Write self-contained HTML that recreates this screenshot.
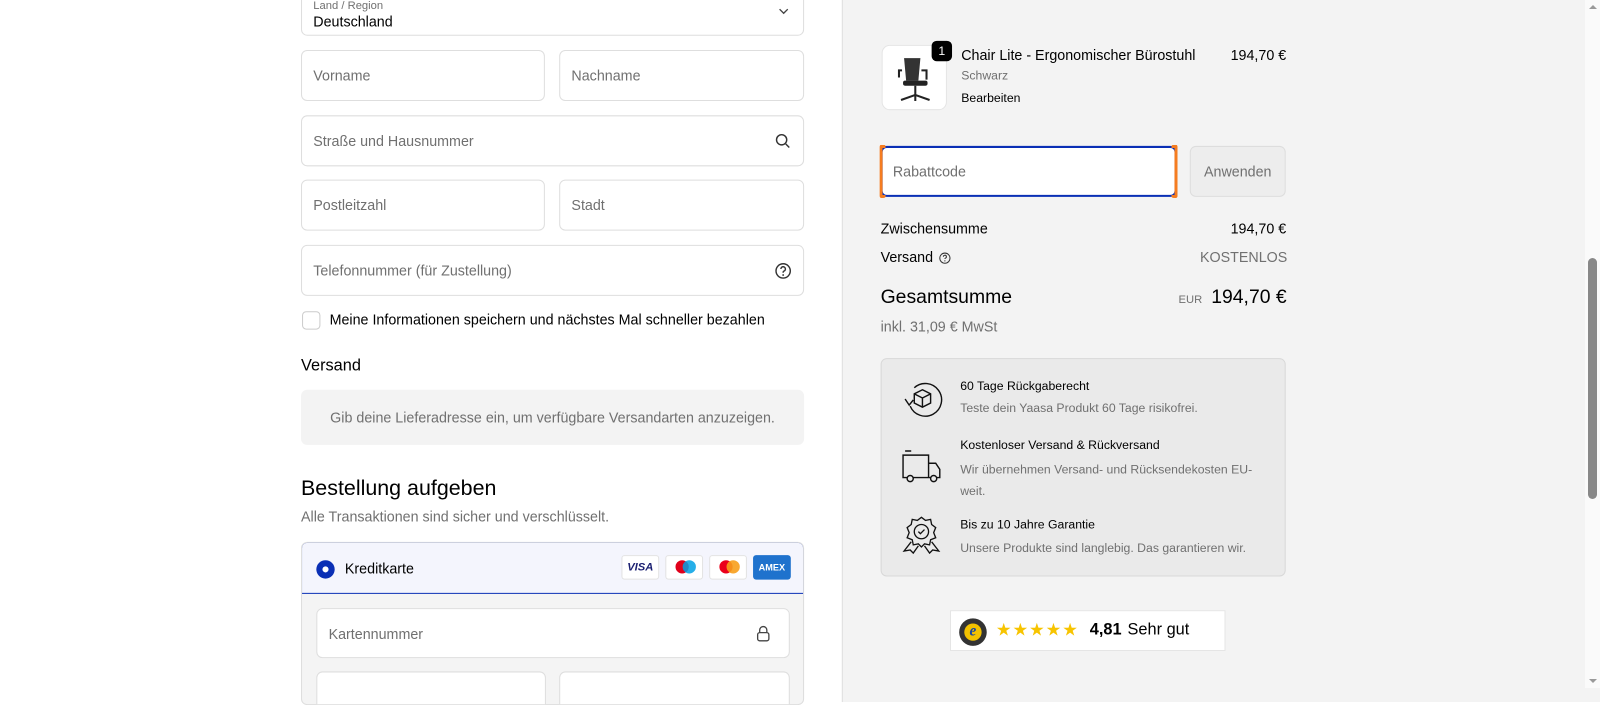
<!DOCTYPE html>
<html><head><meta charset="utf-8"><style>
*{box-sizing:border-box;margin:0;padding:0}
body{width:1600px;height:688px;overflow:hidden;background:#fff;font-family:"Liberation Sans",sans-serif;position:relative;color:#000}
.wrap{position:absolute;left:0;top:0;width:1568px;height:688px;transform:scale(1.0204);transform-origin:0 0}
.a{position:absolute}
.inp{position:absolute;border:1px solid #dedede;border-radius:6px;background:#fff;font-size:14px;color:#707070;padding-left:11px;display:flex;align-items:center}
.right{position:absolute;left:825px;top:0;width:760px;height:688px;background:#f3f3f3;border-left:1px solid #dedede}
.sb{position:absolute;left:1585px;top:0;width:15px;height:688px;background:#fafafa}
.card{position:absolute;width:37px;height:24px;border:1px solid #e3e3e3;border-radius:3px;background:#fff}
</style></head><body>
<div class="wrap">
<div class="inp" style="left:295px;top:-12px;width:493px;height:47px;display:block;padding-top:11px">
<div style="font-size:11px;color:#707070;line-height:12px">Land / Region</div>
<div style="font-size:14px;color:#000;line-height:18px">Deutschland</div>
<svg class="a" style="left:466px;top:18px" width="12" height="8" viewBox="0 0 12 8"><path d="M2 2l4 4 4-4" stroke="#444" fill="none" stroke-width="1.3"/></svg>
</div>
<div class="inp" style="left:295px;top:49px;width:239px;height:50px">Vorname</div>
<div class="inp" style="left:548px;top:49px;width:240px;height:50px">Nachname</div>
<div class="inp" style="left:295px;top:113px;width:493px;height:50px">Straße und Hausnummer
<svg class="a" style="left:463px;top:16px" width="16" height="16" viewBox="0 0 16 16"><circle cx="7" cy="7" r="5" stroke="#333" fill="none" stroke-width="1.4"/><path d="M11 11l3.5 3.5" stroke="#333" stroke-width="1.4"/></svg></div>
<div class="inp" style="left:295px;top:176px;width:239px;height:50px">Postleitzahl</div>
<div class="inp" style="left:548px;top:176px;width:240px;height:50px">Stadt</div>
<div class="inp" style="left:295px;top:240px;width:493px;height:50px">Telefonnummer (für Zustellung)
<svg class="a" style="left:463px;top:16px" width="17" height="17" viewBox="0 0 17 17"><circle cx="8.5" cy="8.5" r="7" stroke="#333" fill="none" stroke-width="1.4"/><path d="M6.3 6.6a2.2 2.2 0 1 1 2.9 2.1c-.5.2-.7.6-.7 1.1v.5" stroke="#333" fill="none" stroke-width="1.4"/><circle cx="8.5" cy="12.5" r=".9" fill="#333"/></svg></div>
<div class="a" style="left:296px;top:305px;width:18px;height:18px;border:1px solid #ccc;border-radius:4px"></div>
<div class="a" style="left:323px;top:305px;font-size:14px">Meine Informationen speichern und nächstes Mal schneller bezahlen</div>
<div class="a" style="left:295px;top:350px;font-size:16px">Versand</div>
<div class="a" style="left:295px;top:382px;width:493px;height:54px;background:#f3f3f3;border-radius:6px;font-size:14px;color:#707070;text-align:center;line-height:54px">Gib deine Lieferadresse ein, um verfügbare Versandarten anzuzeigen.</div>
<div class="a" style="left:295px;top:467px;font-size:21px">Bestellung aufgeben</div>
<div class="a" style="left:295px;top:498px;font-size:14px;color:#707070">Alle Transaktionen sind sicher und verschlüsselt.</div>
<div class="a" style="left:295px;top:531px;width:493px;height:160px;border:1px solid #ddd;border-radius:6px;background:#f4f4f4;overflow:hidden">
 <div class="a" style="left:-1px;top:-1px;width:493px;height:51px;background:#f4f5fd;border:1px solid #0a2fb5;border-radius:6px 6px 0 0"></div>
 <div class="a" style="left:14px;top:17px;width:18px;height:18px;border-radius:50%;background:#0a2fb5"><div class="a" style="left:6px;top:6px;width:6px;height:6px;border-radius:50%;background:#fff"></div></div>
 <div class="a" style="left:42px;top:17px;font-size:14px">Kreditkarte</div>
 <div class="card" style="left:313px;top:12px;font:italic bold 11px 'Liberation Sans';color:#1a1f71;text-align:center;line-height:22px">VISA</div>
 <div class="card" style="left:356px;top:12px"><div class="a" style="left:9px;top:4px;width:13px;height:13px;border-radius:50%;background:#e0001b"></div><div class="a" style="left:16px;top:4px;width:13px;height:13px;border-radius:50%;background:#00a0e4;opacity:.85"></div></div>
 <div class="card" style="left:399px;top:12px"><div class="a" style="left:9px;top:4px;width:13px;height:13px;border-radius:50%;background:#eb001b"></div><div class="a" style="left:16px;top:4px;width:13px;height:13px;border-radius:50%;background:#f79e1b;opacity:.9"></div></div>
 <div class="card" style="left:442px;top:12px;background:#1f72cd;border-color:#1f72cd;color:#fff;font:bold 9px 'Liberation Sans';text-align:center;line-height:22px">AMEX</div>
 <div class="inp" style="left:14px;top:64px;width:464px;height:49px">Kartennummer
 <svg class="a" style="left:430px;top:15px" width="14" height="18" viewBox="0 0 14 18"><path d="M3.5 8V5.5a3.5 3.5 0 0 1 7 0V8" stroke="#444" fill="none" stroke-width="1.3"/><rect x="1.5" y="8" width="11" height="8" rx="2" stroke="#444" fill="none" stroke-width="1.3"/></svg></div>
 <div class="inp" style="left:14px;top:126px;width:225px;height:49px"></div>
 <div class="inp" style="left:252px;top:126px;width:226px;height:49px"></div>
</div>

<div class="right">
 <div class="a" style="left:38px;top:44px;width:64px;height:64px;background:#fff;border:1px solid #e5e5e5;border-radius:8px">
  <svg class="a" style="left:12px;top:6px" width="40" height="52" viewBox="0 0 40 52"><path d="M9 6h16l-2 22H11z" fill="#333"/><rect x="8" y="28" width="24" height="5" rx="2" fill="#222"/><path d="M26 18h5v9M7 18h-3v7" stroke="#222" stroke-width="2" fill="none"/><path d="M20 33v9M6 47l14-5 14 5M20 42v6" stroke="#222" stroke-width="2" fill="none"/></svg>
 </div>
 <div class="a" style="left:87px;top:40px;width:20px;height:20px;background:#000;color:#fff;border-radius:5px;font-size:12px;text-align:center;line-height:20px">1</div>
 <div class="a" style="left:116px;top:46px;font-size:14px">Chair Lite - Ergonomischer Bürostuhl</div>
 <div class="a" style="left:380px;top:46px;font-size:14px">194,70 €</div>
 <div class="a" style="left:116px;top:67px;font-size:12px;color:#707070">Schwarz</div>
 <div class="a" style="left:116px;top:89px;font-size:12px">Bearbeiten</div>
 <div class="a" style="left:37px;top:143px;width:290px;height:50px;background:#fff;border:2px solid #0a2fb5;border-radius:6px;font-size:14px;color:#707070;padding-left:10px;line-height:46px">Rabattcode</div>
 <div class="a" style="left:36px;top:142px;width:6px;height:52px;border-left:3px solid #f57c20;border-top:3px solid #f57c20;border-bottom:3px solid #f57c20;border-radius:2px"></div>
 <div class="a" style="left:322px;top:142px;width:6px;height:52px;border-right:3px solid #f57c20;border-top:3px solid #f57c20;border-bottom:3px solid #f57c20;border-radius:2px"></div>
 <div class="a" style="left:340px;top:143px;width:94px;height:50px;background:#ededed;border:1px solid #ddd;border-radius:6px;font-size:14px;color:#707070;text-align:center;line-height:48px">Anwenden</div>
 <div class="a" style="left:37px;top:216px;font-size:14px">Zwischensumme</div>
 <div class="a" style="left:380px;top:216px;font-size:14px">194,70 €</div>
 <div class="a" style="left:37px;top:244px;font-size:14px">Versand <svg width="12" height="12" viewBox="0 0 12 12" style="vertical-align:-2px;margin-left:2px"><circle cx="6" cy="6" r="5" stroke="#333" fill="none"/><path d="M4.5 4.6a1.5 1.5 0 1 1 2 1.4c-.4.2-.5.4-.5.8" stroke="#333" fill="none"/><circle cx="6" cy="8.7" r=".6" fill="#333"/></svg></div>
 <div class="a" style="left:350px;top:244px;font-size:14px;color:#707070">KOSTENLOS</div>
 <div class="a" style="left:37px;top:281px;font-size:19px">Gesamtsumme</div>
 <div class="a" style="left:329px;top:288px;font-size:11px;color:#707070">EUR</div>
 <div class="a" style="left:361px;top:281px;font-size:19px">194,70 €</div>
 <div class="a" style="left:37px;top:312px;font-size:14px;color:#707070">inkl. 31,09 € MwSt</div>
 <div class="a" style="left:37px;top:351px;width:397px;height:214px;background:#eaeaea;border:1px solid #d8d8d8;border-radius:6px">
  <svg class="a" style="left:20px;top:20px" width="40" height="38" viewBox="0 0 40 38"><path d="M8 26a16 16 0 1 0 4-18" stroke="#111" fill="none" stroke-width="1.4"/><path d="M3 19l4 6 4-5" stroke="#111" fill="none" stroke-width="1.4"/><path d="M20 10l8 4v9l-8 4-8-4v-9zM12 14l8 4 8-4M20 18v9" stroke="#111" fill="none" stroke-width="1.4"/></svg>
  <div class="a" style="left:77px;top:19px;font-size:12px">60 Tage Rückgaberecht</div>
  <div class="a" style="left:77px;top:41px;font-size:12px;color:#707070">Teste dein Yaasa Produkt 60 Tage risikofrei.</div>
  <svg class="a" style="left:19px;top:88px" width="40" height="36" viewBox="0 0 40 36"><path d="M2 6h25v22H2zM27 14h7l4 6v8H27M4 2h6" stroke="#111" fill="none" stroke-width="1.4"/><circle cx="9" cy="29" r="3" fill="#eaeaea" stroke="#111" stroke-width="1.4"/><circle cx="32" cy="29" r="3" fill="#eaeaea" stroke="#111" stroke-width="1.4"/></svg>
  <div class="a" style="left:77px;top:77px;font-size:12px">Kostenloser Versand &amp; Rückversand</div>
  <div class="a" style="left:77px;top:98px;width:300px;font-size:12px;color:#707070;line-height:21px">Wir übernehmen Versand- und Rücksendekosten EU-weit.</div>
  <svg class="a" style="left:19px;top:153px" width="40" height="38" viewBox="0 0 40 38"><path d="M20 2l4 3 5-1 1 5 4 3-2 5 2 5-5 2-1 5-5-1-3 3-3-3-5 1-1-5-5-2 2-5-2-5 4-3 1-5 5 1z" stroke="#111" fill="none" stroke-width="1.3"/><circle cx="20" cy="16" r="7" stroke="#111" fill="none" stroke-width="1.3"/><path d="M17 16l2 2 4-4M10 26l-7 9 6-1 3 3 5-7M30 26l7 9-6-1-3 3-5-7" stroke="#111" fill="none" stroke-width="1.3"/></svg>
  <div class="a" style="left:77px;top:155px;font-size:12px">Bis zu 10 Jahre Garantie</div>
  <div class="a" style="left:77px;top:178px;font-size:12px;color:#707070">Unsere Produkte sind langlebig. Das garantieren wir.</div>
 </div>
 <div class="a" style="left:105px;top:598px;width:270px;height:40px;background:#fff;border:1px solid #e5e5e5">
  <div class="a" style="left:8px;top:7px;width:27px;height:27px;border-radius:50%;background:#333"><div class="a" style="left:5px;top:5px;width:17px;height:17px;border-radius:50%;background:#f2c200;color:#1a47a0;font:italic bold 15px 'Liberation Serif';text-align:center;line-height:17px">e</div></div>
  <div class="a" style="left:44px;top:9px;font-size:17px;color:#f7c400;letter-spacing:1px">★★★★★</div>
  <div class="a" style="left:136px;top:10px;font-size:16px;font-weight:bold">4,81</div>
  <div class="a" style="left:173px;top:10px;font-size:16px">Sehr gut</div>
 </div>
</div>
</div>
<div class="sb">
 <div class="a" style="left:4px;top:5px;width:0;height:0;border-left:4px solid transparent;border-right:4px solid transparent;border-bottom:4px solid #999"></div>
 <div class="a" style="left:3px;top:258px;width:9px;height:241px;background:#888;border-radius:5px"></div>
 <div class="a" style="left:4px;top:679px;width:0;height:0;border-left:4px solid transparent;border-right:4px solid transparent;border-top:4px solid #999"></div>
</div>
</body></html>
